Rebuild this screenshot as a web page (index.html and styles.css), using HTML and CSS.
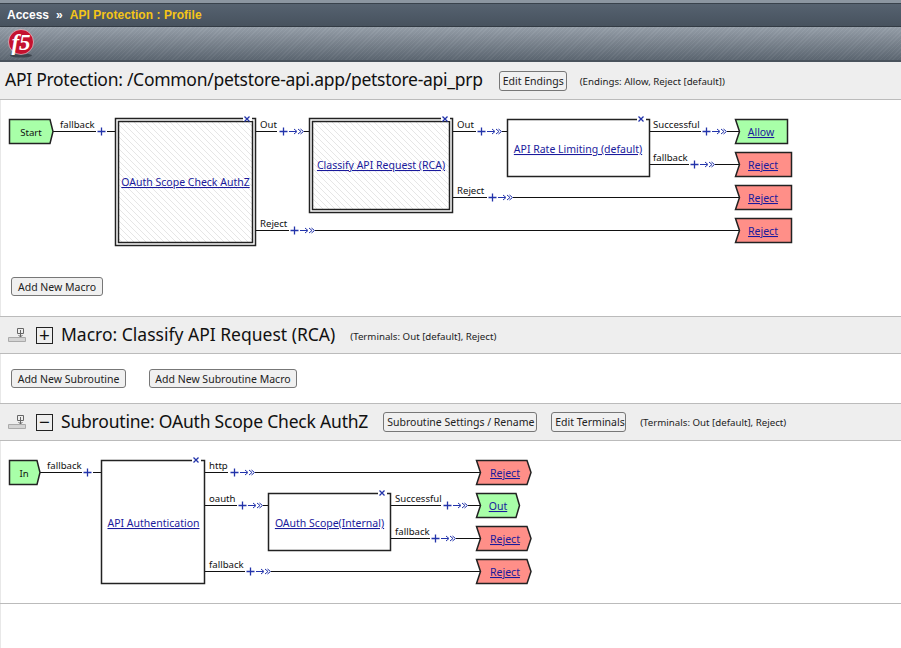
FILE: index.html
```html
<!DOCTYPE html>
<html lang="en">
<head>
    <meta charset="UTF-8">
    <title>Access - API Protection : Profile</title>
    <link rel="stylesheet" href="styles.css">
</head>
<body>
    <header>
        <div class="top-strip"></div>
        <div class="crumbs">
            <span class="crumb">Access</span>
            <span class="crumb-sep">&#187;</span>
            <span class="crumb-current">API Protection : Profile</span>
        </div>
        <div class="logo-bar">
            <svg class="logo" width="26" height="29" viewBox="0 0 26 29">
                <ellipse class="logo-shadow" cx="13" cy="26.500" rx="11" ry="2"/>
                <circle class="logo-disc" cx="13" cy="13" r="12.500"/>
                <text class="logo-text" x="13" y="20.500">f5</text>
            </svg>
        </div>
    </header>

    <section class="title-row profile-row">
        <h1>API Protection: /Common/petstore-api.app/petstore-api_prp</h1>
        <button class="edit-endings">Edit Endings</button>
        <span class="note">(Endings: Allow, Reject [default])</span>
    </section>

    <section class="canvas canvas-main">
        <svg width="901" height="216" viewBox="0 100 901 216">
            <defs>
                <pattern id="hatch" width="6" height="6" patternUnits="userSpaceOnUse">
                    <path class="hatch-line" d="M-1 -1L7 7M-1 5L1 7M5 -1L7 1"/>
                </pattern>
                <path id="plus" class="plus" d="M-3.500 0H4.500M0.500 -4V4"/>
                <path id="arrow" class="plus thin" d="M0 0H7M5 -2.500L8 0L5 2.500M9 -2.500L12 0L9 2.500M11.500 -2.500L14.500 0L11.500 2.500"/>
                <path id="close" class="plus" d="M-2.500 -2.500L2.500 2.500M-2.500 2.500L2.500 -2.500"/>
            </defs>

            <!-- wires -->
            <path class="wire" d="M53 131.500H96M107 131.500H115"/>
            <path class="wire" d="M256 131.500H277M304 131.500H309"/>
            <path class="wire" d="M453 131.500H476M502 131.500H507"/>
            <path class="wire" d="M650 131.500H701M727 131.500H739"/>
            <path class="wire" d="M650 164.500H689M715 164.500H739"/>
            <path class="wire" d="M453 197.500H487M513 197.500H739"/>
            <path class="wire" d="M256 230.500H289M315 230.500H739"/>

            <!-- terminals -->
            <polygon class="node green" points="9.500,119.500 50,119.500 53,131.500 50,143.500 9.500,143.500"/>
            <text class="label mid" x="31" y="136">Start</text>

            <polygon class="node green" points="735.500,119.500 787.500,119.500 787.500,143.500 735.500,143.500 739.500,131.500"/>
            <a href="#"><text class="link mid" x="761" y="136">Allow</text></a>
            <polygon class="node red" points="735.500,152.500 791.500,152.500 791.500,176.500 735.500,176.500 739.500,164.500"/>
            <a href="#"><text class="link mid" x="763" y="169">Reject</text></a>
            <polygon class="node red" points="735.500,185.500 791.500,185.500 791.500,209.500 735.500,209.500 739.500,197.500"/>
            <a href="#"><text class="link mid" x="763" y="202">Reject</text></a>
            <polygon class="node red" points="735.500,218.500 791.500,218.500 791.500,242.500 735.500,242.500 739.500,230.500"/>
            <a href="#"><text class="link mid" x="763" y="235">Reject</text></a>

            <!-- macro boxes -->
            <rect class="box" x="115.500" y="118.500" width="140" height="127"/>
            <rect class="box hatched" x="118.500" y="121.500" width="134" height="121"/>
            <a href="#"><text class="link mid" x="185.500" y="186">OAuth Scope Check AuthZ</text></a>
            <rect class="gap" x="243" y="116" width="9" height="5"/>
            <use href="#close" x="247" y="119"/>

            <rect class="box" x="309.500" y="118.500" width="143" height="94"/>
            <rect class="box hatched" x="312.500" y="121.500" width="137" height="88"/>
            <a href="#"><text class="link mid" x="381" y="169">Classify API Request (RCA)</text></a>
            <rect class="gap" x="441" y="116" width="9" height="5"/>
            <use href="#close" x="445" y="119"/>

            <rect class="box" x="507.500" y="119.500" width="142" height="57"/>
            <a href="#"><text class="link mid" x="578" y="153">API Rate Limiting (default)</text></a>
            <rect class="gap" x="637" y="117" width="9" height="5"/>
            <use href="#close" x="641" y="119"/>

            <!-- wire labels -->
            <text class="label" x="60" y="128">fallback</text>
            <text class="label" x="260" y="128">Out</text>
            <text class="label" x="457" y="128">Out</text>
            <text class="label" x="653" y="128">Successful</text>
            <text class="label" x="653" y="161">fallback</text>
            <text class="label" x="457" y="194">Reject</text>
            <text class="label" x="260" y="227">Reject</text>

            <use href="#plus" x="101" y="131.500"/>
            <use href="#plus" x="283" y="131.500"/>
            <use href="#arrow" x="289" y="131.500"/>
            <use href="#plus" x="481" y="131.500"/>
            <use href="#arrow" x="487" y="131.500"/>
            <use href="#plus" x="706" y="131.500"/>
            <use href="#arrow" x="712" y="131.500"/>
            <use href="#plus" x="694" y="164.500"/>
            <use href="#arrow" x="700" y="164.500"/>
            <use href="#plus" x="492" y="197.500"/>
            <use href="#arrow" x="498" y="197.500"/>
            <use href="#plus" x="294" y="230.500"/>
            <use href="#arrow" x="300" y="230.500"/>
        </svg>
        <button class="add-macro">Add New Macro</button>
    </section>

    <section class="title-row tree-row">
        <svg class="drag-icon" width="18" height="16" viewBox="0 0 18 16">
            <path class="drag-base" d="M0.500 10.500H17.500V14.500H0.500Z"/>
            <path class="drag-top" d="M9.500 1.500H15.500V6.500H9.500ZM12.500 3V10M10.500 8L12.500 10L14.500 8"/>
        </svg>
        <span class="toggle">+</span>
        <h2>Macro: Classify API Request (RCA)</h2>
        <span class="note">(Terminals: Out [default], Reject)</span>
    </section>

    <section class="macro-actions">
        <button>Add New Subroutine</button>
        <button>Add New Subroutine Macro</button>
    </section>

    <section class="title-row tree-row">
        <svg class="drag-icon" width="18" height="16" viewBox="0 0 18 16">
            <path class="drag-base" d="M0.500 10.500H17.500V14.500H0.500Z"/>
            <path class="drag-top" d="M9.500 1.500H15.500V6.500H9.500ZM12.500 3V10M10.500 8L12.500 10L14.500 8"/>
        </svg>
        <span class="toggle">&#8722;</span>
        <h2 class="sub-title">Subroutine: OAuth Scope Check AuthZ</h2>
        <button class="rename">Subroutine Settings / Rename</button>
        <button class="edit-terminals">Edit Terminals</button>
        <span class="note">(Terminals: Out [default], Reject)</span>
    </section>

    <section class="canvas canvas-sub">
        <svg width="901" height="162" viewBox="0 441 901 162">
            <!-- wires -->
            <path class="wire" d="M40 472.500H82M93 472.500H101"/>
            <path class="wire" d="M204 472.500H228M255 472.500H480"/>
            <path class="wire" d="M204 505.500H237M263 505.500H268"/>
            <path class="wire" d="M390 505.500H441M468 505.500H480"/>
            <path class="wire" d="M390 538.500H430M456 538.500H480"/>
            <path class="wire" d="M204 571.500H245M271 571.500H480"/>

            <!-- terminals -->
            <polygon class="node green" points="9.500,460.500 37,460.500 40,472.500 37,484.500 9.500,484.500"/>
            <text class="label mid" x="24" y="477">In</text>

            <polygon class="node red" points="476.500,460.500 527,460.500 531,472.500 527,484.500 476.500,484.500 480.500,472.500"/>
            <a href="#"><text class="link mid" x="505" y="477">Reject</text></a>
            <polygon class="node green" points="476.500,493.500 516,493.500 519.500,505.500 516,517.500 476.500,517.500 480.500,505.500"/>
            <a href="#"><text class="link mid" x="498" y="510">Out</text></a>
            <polygon class="node red" points="476.500,526.500 527,526.500 531,538.500 527,550.500 476.500,550.500 480.500,538.500"/>
            <a href="#"><text class="link mid" x="505" y="543">Reject</text></a>
            <polygon class="node red" points="476.500,559.500 527,559.500 531,571.500 527,583.500 476.500,583.500 480.500,571.500"/>
            <a href="#"><text class="link mid" x="505" y="576">Reject</text></a>

            <!-- boxes -->
            <rect class="box" x="101.500" y="460.500" width="103" height="123"/>
            <a href="#"><text class="link mid" x="153.500" y="527">API Authentication</text></a>
            <rect class="gap" x="192" y="458" width="9" height="5"/>
            <use href="#close" x="196" y="460"/>

            <rect class="box" x="268.500" y="493.500" width="122" height="57"/>
            <a href="#"><text class="link mid" x="329.500" y="527">OAuth Scope(Internal)</text></a>
            <rect class="gap" x="378" y="491" width="9" height="5"/>
            <use href="#close" x="382" y="493"/>

            <!-- wire labels -->
            <text class="label" x="47" y="469">fallback</text>
            <text class="label" x="209" y="469">http</text>
            <text class="label" x="209" y="502">oauth</text>
            <text class="label" x="209" y="568">fallback</text>
            <text class="label" x="395" y="502">Successful</text>
            <text class="label" x="395" y="535">fallback</text>

            <use href="#plus" x="87" y="472.500"/>
            <use href="#plus" x="234" y="472.500"/>
            <use href="#arrow" x="240" y="472.500"/>
            <use href="#plus" x="242" y="505.500"/>
            <use href="#arrow" x="248" y="505.500"/>
            <use href="#plus" x="447" y="505.500"/>
            <use href="#arrow" x="453" y="505.500"/>
            <use href="#plus" x="435" y="538.500"/>
            <use href="#arrow" x="441" y="538.500"/>
            <use href="#plus" x="250" y="571.500"/>
            <use href="#arrow" x="256" y="571.500"/>
        </svg>
    </section>
</body>
</html>
```

FILE: styles.css
```css
html {
    background-color: #fff;
}

body {
    margin: 0;
    padding: 0;
    min-height: 100vh;
    font-family: "Noto Sans", "DejaVu Sans", sans-serif;
    color: #111;
    overflow: hidden;
    box-shadow: inset 1px 0 #e8e8e8;
}

.top-strip {
    height: 3px;
    background-color: #8c96a1;
}

.crumbs {
    height: 24px;
    padding-left: 7px;
    display: flex;
    align-items: center;
    gap: 7px;
    font-family: "Liberation Sans", Arial, sans-serif;
    font-size: 12px;
    font-weight: bold;
    color: #fff;
    background: linear-gradient(#566270, #47525e);
    border-top: 1px solid #39424c;
    border-bottom: 1px solid #333b44;
    box-sizing: border-box;
}

.crumb-current {
    color: #f5c518;
    letter-spacing: 0.05px;
}

.logo-bar {
    height: 35px;
    padding-left: 8px;
    box-sizing: border-box;
    display: flex;
    align-items: center;
    background: repeating-linear-gradient(135deg, rgba(255,255,255,0.04) 0 1px, rgba(0,0,0,0.02) 1px 3px), linear-gradient(#97a0aa, #5d6772);
    border-bottom: 2px solid #49525c;
}

.logo-disc {
    fill: #c4122f;
    stroke: #fff;
    stroke-width: 0.5;
}

.logo-shadow {
    fill: #3c444d;
}

.logo-text {
    font-family: "Liberation Serif", serif;
    font-size: 23px;
    font-weight: bold;
    font-style: italic;
    fill: #fff;
    text-anchor: middle;
}

.title-row {
    display: flex;
    align-items: center;
    box-sizing: border-box;
    background-color: #eee;
    border-bottom: 1px solid #bbb;
}

.profile-row {
    height: 38px;
    padding-left: 5px;
}

.tree-row {
    height: 38px;
    padding-left: 8px;
    border-top: 1px solid #bbb;
}

h1, h2 {
    margin: 0;
    font-size: 17.500px;
    font-weight: normal;
    color: #111;
    white-space: nowrap;
}

h1 {
    letter-spacing: -0.28px;
    margin-bottom: 3px;
}

button {
    height: 20px;
    padding: 0 3px;
    font-family: "Noto Sans", "DejaVu Sans", sans-serif;
    font-size: 10.500px;
    color: #222;
    background-color: #f0f0f0;
    border: 1px solid #777;
    border-radius: 3px;
    white-space: nowrap;
}

.note {
    font-size: 9.700px;
    color: #222;
    white-space: nowrap;
}

.edit-endings {
    width: 68px;
    margin-left: 16px;
}

.profile-row .note {
    margin-left: 13px;
    margin-top: 2px;
}

.drag-icon {
    flex: none;
}

.drag-base {
    fill: #d4d4d4;
    stroke: #aaa;
}

.drag-top {
    fill: none;
    stroke: #666;
}

.toggle {
    width: 15px;
    height: 15px;
    margin-left: 10px;
    display: flex;
    align-items: center;
    justify-content: center;
    border: 1px solid #222;
    font-size: 19px;
    line-height: 1;
    color: #111;
    flex: none;
}

.tree-row h2 {
    margin-left: 8px;
    margin-bottom: 3px;
}

.tree-row .sub-title {
    letter-spacing: -0.2px;
}

.tree-row h2 + .note {
    margin-left: 15px;
    margin-top: 2px;
}

.rename {
    width: 154px;
    margin-left: 15px;
}

.edit-terminals {
    width: 75px;
    margin-left: 14px;
}

.rename ~ .note {
    margin-left: 14px;
    margin-top: 1px;
}

.macro-actions {
    height: 49px;
    padding-left: 11px;
    box-sizing: border-box;
    display: flex;
    align-items: center;
    gap: 23px;
}

.macro-actions button {
    width: 115px;
    height: 19px;
}

.macro-actions button + button {
    width: 148px;
}

.canvas {
    position: relative;
}

.canvas svg {
    display: block;
}

.canvas-main {
    height: 216px;
}

.canvas-sub {
    height: 162px;
    border-bottom: 1px solid #bbb;
}

.add-macro {
    position: absolute;
    left: 11px;
    top: 177px;
    width: 92px;
    height: 19px;
}

.wire {
    fill: none;
    stroke: #111;
    stroke-width: 1;
}

.node {
    stroke: #222;
    stroke-width: 1.500;
}

.green {
    fill: #a8ffa8;
}

.red {
    fill: #ff8f88;
}

.box {
    fill: #fff;
    stroke: #222;
    stroke-width: 1.500;
}

.hatched {
    fill: url(#hatch);
}

.hatch-line {
    fill: none;
    stroke: #e6e6e6;
    stroke-width: 1;
}

.gap {
    fill: #fff;
}

.plus {
    fill: none;
    stroke: #2233aa;
    stroke-width: 1.300;
}

.thin {
    stroke-width: 1;
}

.label {
    font-size: 9.600px;
    fill: #111;
}

.link {
    font-size: 10.500px;
    fill: #1a1a9c;
    text-decoration: underline;
}

.mid {
    text-anchor: middle;
}
```
